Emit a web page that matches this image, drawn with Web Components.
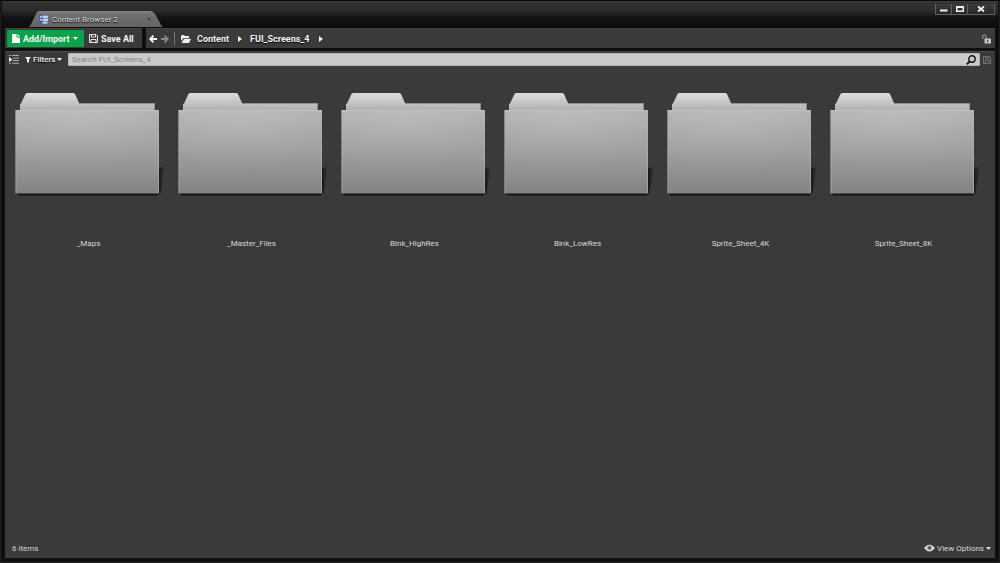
<!DOCTYPE html>
<html lang="en">
<head>
<meta charset="utf-8">
<title>Content Browser</title>
<style>
html, body { margin: 0; background: #0c0c0c; }
body { font-family: Roboto, "Liberation Sans", sans-serif; font-size: 8px; color: #d8d8d8; }
</style>
</head>
<body>
<browser-window>
  <title-bar slot="title"><dock-tab>Content Browser 2</dock-tab></title-bar>
  <nav-toolbar slot="toolbar"></nav-toolbar>
  <filter-bar slot="filters"></filter-bar>
  <asset-grid>
    <folder-tile>_Maps</folder-tile>
    <folder-tile>_Master_Files</folder-tile>
    <folder-tile>Bink_HighRes</folder-tile>
    <folder-tile>Bink_LowRes</folder-tile>
    <folder-tile>Sprite_Sheet_4K</folder-tile>
    <folder-tile>Sprite_Sheet_8K</folder-tile>
  </asset-grid>
  <status-bar slot="status">6 items</status-bar>
</browser-window>

<script>
const base = `
  * { box-sizing: border-box; }
  button { display: flex; align-items: center; margin: 0; padding: 0; border: 0; background: none; color: inherit; font: inherit; white-space: nowrap; }
  svg { display: block; flex: none; }
`;

function define(name, css, html) {
  const template = document.createElement('template');
  template.innerHTML = `<style>${base}${css}</style>${html}`;
  customElements.define(name, class extends HTMLElement {
    constructor() {
      super();
      this.attachShadow({ mode: 'open' }).append(template.content.cloneNode(true));
    }
  });
}

define('browser-window', `
  :host { display: flex; flex-direction: column; min-height: 100vh; padding: 0 5px 5px; box-sizing: border-box;
    background: #0f0f0f; border-top: 1px solid #050505; box-shadow: inset 1px 0 #1f1f1f, inset -1px 0 #1f1f1f, inset 0 -1px #222; }
  main { flex: 1; display: flex; flex-direction: column; background: #3a3a3a; margin-top: 3px; border-top: 1px solid #484848; }
  .body { flex: 1; }
`, `
  <slot name="title"></slot>
  <slot name="toolbar"></slot>
  <main>
    <slot name="filters"></slot>
    <div class="body"><slot></slot></div>
    <slot name="status"></slot>
  </main>
`);

define('title-bar', `
  :host { display: flex; justify-content: space-between; align-items: flex-start; height: 27px; margin: 0 -3px; padding: 0 3px 0 27px;
    background: linear-gradient(#343434 0, #2b2b2b 8px, #131313 16px, #0c0c0c 100%); border-top: 1px solid #3c3c3c; box-sizing: border-box; }
  .tabs { padding-top: 9px; }
  .controls { display: flex; border: 1px solid #606060; border-top-color: #333; margin-top: 1px; }
  .controls button { width: 16px; height: 10px; justify-content: center; color: #f0f0f0;
    background: linear-gradient(#3b3b3b, #262626); border-right: 1px solid #606060; }
  .controls button:last-child { width: 26px; border-right: 0; }
`, `
  <div class="tabs"><slot></slot></div>
  <div class="controls">
    <button aria-label="Minimize"><svg width="10" height="8"><path d="M1 4.500h7.500v2H1z" fill="currentColor"/></svg></button>
    <button aria-label="Maximize"><svg width="10" height="8"><path d="M1 1h8v6H1zM2.500 3v2.500h5V3z" fill="currentColor" fill-rule="evenodd"/></svg></button>
    <button aria-label="Close"><svg width="8" height="8"><path d="M1 1.500l6 5M7 1.500l-6 5" stroke="currentColor" stroke-width="1.900"/></svg></button>
  </div>
`);

define('dock-tab', `
  :host { display: grid; width: 134px; height: 16px; }
  .shape, .row { grid-area: 1 / 1; }
  .row { display: flex; align-items: center; padding: 0 12px 0 10px; color: #e8e8e8; text-shadow: 0 1px 1px #000, 0 0 1px #222; }
  .label { flex: 1; margin-left: 4px; }
  .close { color: #3c3c3c; }
`, `
  <svg class="shape" width="134" height="16">
    <defs><linearGradient id="tab" x2="0" y2="1"><stop stop-color="#858585"/><stop offset=".2" stop-color="#707070"/><stop offset="1" stop-color="#646464"/></linearGradient></defs>
    <path d="M0 16 Q2 14 4 9 L7 3 Q8 0 11 0 H121 Q124 0 126 3 L130 10 Q132 15 134 16Z" fill="url(#tab)"/>
  </svg>
  <div class="row">
    <svg width="9" height="9"><rect width="9" height="9" rx="1" fill="#6f8cc6"/><path d="M0 0h3v9H0z" fill="#3f62aa"/><path d="M1 1h2v1.500H1zM4 1h5v2H4zM1 4h2v1.500H1zM4 4h5v2H4zM4 7h4v1.500H4z" fill="#c4d3ef"/></svg>
    <span class="label"><slot></slot></span>
    <button class="close" aria-label="Close tab"><svg width="4" height="4"><path d="M.5 .5l3 3M3.500 .5L.5 3.500" stroke="currentColor"/></svg></button>
  </div>
`);

define('nav-toolbar', `
  :host { display: flex; gap: 4px; height: 20px; font-size: 9px; font-weight: 700; color: #f4f4f4; text-shadow: 0 1px 1px #000; }
  .group { display: flex; align-items: center; background: #3a3a3a; border-top: 1px solid #444; }
  .files { width: 137px; padding-left: 2px; gap: 5px; }
  .path { flex: 1; padding: 0 4px 0 3px; }
  .add { height: 17px; width: 77px; padding-left: 5px; gap: 3px; background: #0aa24b; border-radius: 1px; }
  .save { gap: 3px; }
  .path .back { margin-right: 4px; }
  .rule { width: 1px; height: 13px; background: #777; margin: 0 6px 0 5px; }
  nav { flex: 1; display: flex; align-items: center; }
  a { color: inherit; text-decoration: none; }
  .folder { margin-right: 6px; }
  .arrow { margin: 0 8px 0 9px; }
`, `
  <div class="group files">
    <button class="add">
      <svg width="8" height="9"><path d="M0 0h4.500v3.500H8V9H0z" fill="#fff"/><path d="M5.500 0L8 2.500H5.500z" fill="#fff"/></svg>
      Add/Import
      <svg width="5" height="3"><path d="M0 0h5L2.500 3z" fill="#fff"/></svg>
    </button>
    <button class="save">
      <svg width="9" height="9" fill="none" stroke="#e6e6e6"><path d="M.5.5h6.500l1.500 1.500v6.500h-8zM2.500.5v2.500h4V.5M2 8.500v-3h5v3"/></svg>
      Save All
    </button>
  </div>
  <div class="group path">
    <button class="back" aria-label="Back"><svg width="8" height="8" fill="none" stroke="#fff" stroke-width="1.800"><path d="M8 4H1.500M4.500.7L1.200 4l3.300 3.300"/></svg></button>
    <button aria-label="Forward"><svg width="8" height="8" fill="none" stroke="#888" stroke-width="1.800"><path d="M0 4h6.500M3.500.7L6.800 4 3.500 7.300"/></svg></button>
    <span class="rule"></span>
    <nav aria-label="Path">
      <svg class="folder" width="10" height="8"><path d="M0 6V1l1-1h2l1 1h4v2H2.500z" fill="#eee"/><path d="M3 3.800h7L8 8H.5z" fill="#eee"/></svg>
      <a href="#content">Content</a>
      <svg class="arrow" width="4" height="6"><path d="M0 0l4 3-4 3z" fill="#f4f4f4"/></svg>
      <a href="#screens">FUI_Screens_4</a>
      <svg class="arrow" width="4" height="6"><path d="M0 0l4 3-4 3z" fill="#f4f4f4"/></svg>
    </nav>
    <button aria-label="Lock"><svg width="9" height="10"><path d="M.7 5V2.500a1.700 1.700 0 0 1 3.400 0V5" fill="none" stroke="#aaa"/><path d="M2.500 4.500H9V9.500H2.500z" fill="#c4c4c4"/><path d="M5.200 6h1v2h-1z" fill="#333"/></svg></button>
  </div>
`);

define('filter-bar', `
  :host { display: flex; align-items: center; height: 15px; padding: 0 4px 0 3px; color: #efefef; font-weight: 500; }
  .filters { gap: 2px; width: 43px; margin-left: 6px; text-shadow: 0 1px 1px #000; }
  .sources { width: 11px; }
  .search { flex: 1; display: flex; align-items: center; height: 13px; margin-right: 3px; padding: 0 3px; background: #cacaca; border: 1px solid #b4b4b4; border-radius: 1px; }
  input { flex: 1; min-width: 0; height: 11px; padding: 0; border: 0; outline: 0; background: none; font: 400 8px Roboto, "Liberation Sans", sans-serif; color: #222; }
  input::placeholder { color: #858585; opacity: 1; }
`, `
  <button class="sources" aria-label="Show sources panel"><svg width="11" height="9"><path d="M1 .5h2M4 .5h7M5 3h6M5 5.500h6M4 8.200h7M1 8.200h2" stroke="#aaa"/><path d="M1 2l3.500 2.500L1 7z" fill="#eee"/></svg></button>
  <button class="filters"><svg width="6" height="6"><path d="M0 0h6L4 2.500V6L2 5V2.500z" fill="#eee"/></svg>Filters<svg width="5" height="3"><path d="M0 0h5L2.500 3z" fill="#eee"/></svg></button>
  <label class="search">
    <input type="search" placeholder="Search FUI_Screens_4" aria-label="Search FUI_Screens_4">
    <svg width="10" height="10" fill="none" stroke="#151515"><circle cx="6" cy="4" r="3.200" stroke-width="1.400"/><path d="M3.800 6.400L.8 9.300" stroke-width="2"/></svg>
  </label>
  <button aria-label="Save search"><svg width="8" height="8" fill="none" stroke="#707070"><path d="M.5.5h6l1 1v6h-7zM2.500.5v2h3v-2M2 7.500v-3h4v3"/></svg></button>
`);

define('asset-grid', `
  :host { display: grid; grid-template-columns: repeat(auto-fill, 163px); padding: 26px 1px 0 2px; }
`, `<slot></slot>`);

define('folder-tile', `
  :host { display: flex; flex-direction: column; align-items: center; height: 163px; }
  .icon { margin-left: 3px; }
  .name { margin-top: 40px; line-height: 10px; }
`, `
  <svg class="icon" width="150" height="106" viewBox="0 0 150 106">
    <defs>
      <linearGradient id="back" x2="0" y2="1"><stop stop-color="#dcdcdc"/><stop offset="1" stop-color="#b0b0b0"/></linearGradient>
      <linearGradient id="front" x2="0" y2="1"><stop stop-color="#b3b3b3"/><stop offset=".55" stop-color="#9d9d9d"/><stop offset="1" stop-color="#828282"/></linearGradient>
      <radialGradient id="glow" cx=".42" cy="0" r=".7"><stop stop-color="#fff" stop-opacity=".13"/><stop offset="1" stop-color="#fff" stop-opacity="0"/></radialGradient>
      <linearGradient id="cast"><stop stop-color="#181818"/><stop offset="1" stop-color="#343434"/></linearGradient>
    </defs>
    <path d="M144 74.500h5.500l-4 26H144z" fill="url(#cast)"/>
    <path d="M2 100h142l-1 2.500H3z" fill="#141414"/>
    <path d="M5 18V11l1-.5L10.500 1 12 0H58.500L60 1l4 9H139.500V18z" fill="url(#back)"/>
    <path d="M64 10.500H139.500M139.500 11v6" stroke="#909090" fill="none"/>
    <path d="M.5 17.500h143.500v83H.5z" fill="url(#front)"/>
    <path d="M.5 17.500h143.500v83H.5z" fill="url(#glow)"/>
    <path d="M1 100V17.700M143.500 100V17.700" fill="none" stroke="#b0b0b0" stroke-opacity=".6"/>
    <path d="M.5 17.500H144" stroke="#c2c2c2"/>
  </svg>
  <span class="name"><slot></slot></span>
`);

define('status-bar', `
  :host { display: flex; justify-content: space-between; align-items: center; height: 20px; padding: 0 4px 0 7px; }
  button { gap: 2px; }
`, `
  <span><slot></slot></span>
  <button>
    <svg width="11" height="8"><path d="M0 4Q5.500-3 11 4 5.500 11 0 4z" fill="#dcdcdc"/><circle cx="5.500" cy="3.800" r="2.300" fill="#6f8798"/><circle cx="5.500" cy="3.800" r="1" fill="#2c3a44"/></svg>
    View Options
    <svg width="5" height="3"><path d="M0 0h5L2.500 3z" fill="#ddd"/></svg>
  </button>
`);
</script>
</body>
</html>
